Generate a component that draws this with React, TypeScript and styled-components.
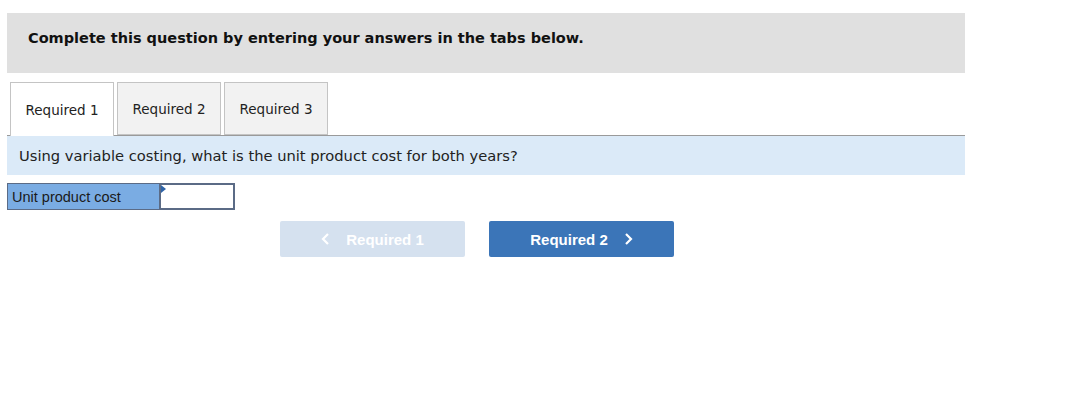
import React from "react";
import styled, { createGlobalStyle } from "styled-components";

const Global = createGlobalStyle`
  body {
    margin: 0;
    background: #fff;
    font-family: "DejaVu Sans", Verdana, sans-serif;
  }
`;

const Page = styled.div`
  width: 958px;
  padding: 13px 0 0 7px;
`;

const Banner = styled.div`
  height: 60px;
  box-sizing: border-box;
  background: #e0e0e0;
  padding: 17px 0 0 21px;
  font-size: 14.5px;
  font-weight: bold;
  color: #111;
`;

const TabStrip = styled.div`
  display: flex;
  gap: 3px;
  margin-top: 9px;
  padding-left: 3px;
  border-bottom: 1px solid #9a9a9a;
  height: 53px;
`;

const Tab = styled.div<{ $active?: boolean }>`
  width: 104px;
  height: ${(p) => (p.$active ? 54 : 53)}px;
  box-sizing: border-box;
  border: 1px solid #c4c4c4;
  border-bottom: ${(p) => (p.$active ? "none" : "1px solid #c4c4c4")};
  background: ${(p) => (p.$active ? "#fff" : "#f2f2f2")};
  display: flex;
  align-items: center;
  justify-content: center;
  padding-bottom: 0;
  font-family: Tahoma, "DejaVu Sans", sans-serif;
  font-size: 13.5px;
  color: #222;
  position: relative;
  z-index: 1;
`;

const Question = styled.div`
  height: 39px;
  background: #dbeaf8;
  display: flex;
  align-items: center;
  padding-left: 12px;
  font-size: 14.7px;
  color: #222;
`;

const AnswerRow = styled.div`
  display: flex;
  margin-top: 8px;
  height: 27px;
`;

const LabelCell = styled.div`
  width: 152px;
  box-sizing: border-box;
  background: #7aace3;
  border: 1px solid #5b6b86;
  border-right: none;
  display: flex;
  align-items: center;
  padding-left: 4px;
  font-family: "Liberation Sans", Arial, sans-serif;
  font-size: 14.5px;
  color: #1a1a1a;
`;

const InputCell = styled.div`
  width: 76px;
  box-sizing: border-box;
  border: 2px solid #5b6b86;
  background: #fff;
  position: relative;

  &::before {
    content: "";
    position: absolute;
    left: 0;
    top: 0;
    border-top: 4px solid transparent;
    border-bottom: 4px solid transparent;
    border-left: 5px solid #2f64a8;
  }
`;

const Nav = styled.div`
  display: flex;
  gap: 24px;
  margin-top: 11px;
  padding-left: 273px;
`;

const NavButton = styled.button<{ $disabled?: boolean }>`
  width: 185px;
  height: 36px;
  border: none;
  border-radius: 2px;
  background: ${(p) => (p.$disabled ? "#d5e1ef" : "#3b75b8")};
  color: #fff;
  font-family: "Liberation Sans", Arial, sans-serif;
  font-weight: bold;
  font-size: 15px;
  display: flex;
  align-items: center;
  justify-content: center;
  gap: 16px;
  padding: 0;
`;

const Chevron = ({ dir }: { dir: "left" | "right" }) => (
  <svg width="9" height="12" viewBox="0 0 9 12">
    <path
      d={dir === "left" ? "M7 1 L2 6 L7 11" : "M2 1 L7 6 L2 11"}
      fill="none"
      stroke="#fff"
      strokeWidth="2.2"
    />
  </svg>
);

const App: React.FC = () => (
  <Page>
    <Global />
    <Banner>Complete this question by entering your answers in the tabs below.</Banner>
    <TabStrip>
      <Tab $active>Required 1</Tab>
      <Tab>Required 2</Tab>
      <Tab>Required 3</Tab>
    </TabStrip>
    <Question>Using variable costing, what is the unit product cost for both years?</Question>
    <AnswerRow>
      <LabelCell>Unit product cost</LabelCell>
      <InputCell />
    </AnswerRow>
    <Nav>
      <NavButton $disabled>
        <Chevron dir="left" />
        Required 1
      </NavButton>
      <NavButton>
        Required 2
        <Chevron dir="right" />
      </NavButton>
    </Nav>
  </Page>
);

export default App;
